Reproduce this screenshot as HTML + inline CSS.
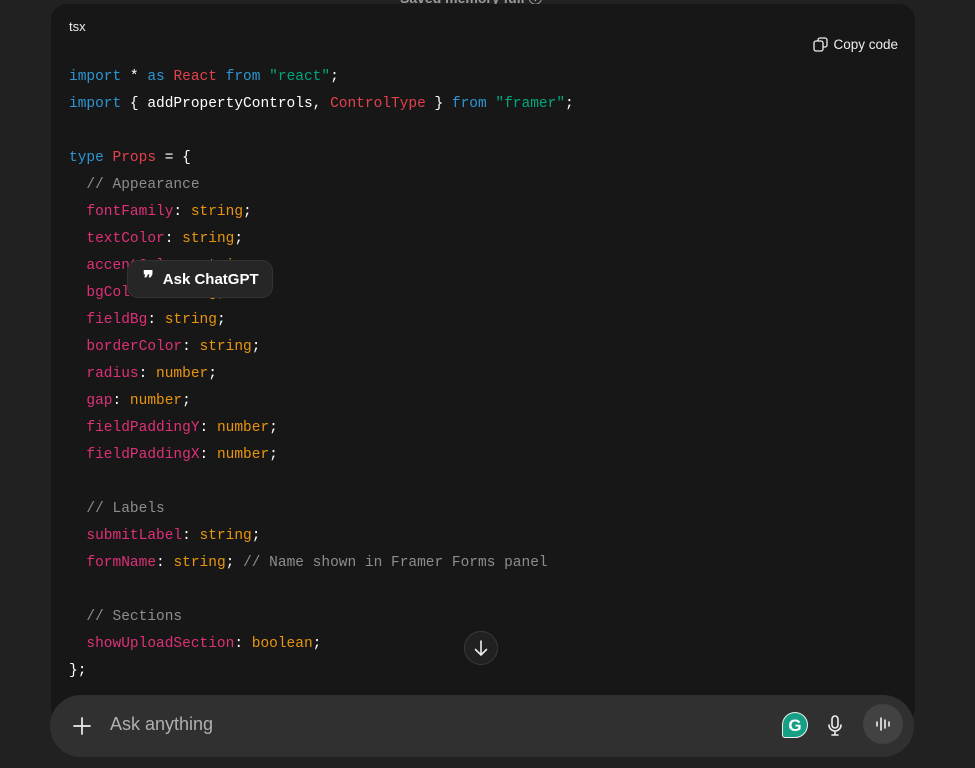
<!DOCTYPE html>
<html><head><style>
body{margin:0;width:975px;height:768px;background:#212121;overflow:hidden;position:relative;font-family:"Liberation Sans",sans-serif}
.top{position:absolute;left:400px;top:-12px;color:#9b9b9b;font-size:14px;font-weight:bold}
.code{position:absolute;left:51px;top:4px;width:864px;height:720px;background:#171717;border-radius:16px}
.lang{position:absolute;left:18px;top:15px;color:#eee;font-size:13px}
.copy{position:absolute;right:17px;top:33px;color:#eee;font-size:13.5px;display:flex;align-items:center;gap:5px}
pre{position:absolute;left:18px;top:60px;margin:0;font-family:"Liberation Mono",monospace;font-size:14.5px;line-height:27px;color:#fff}
.k{color:#2e95d3}.r{color:#e2414b}.s{color:#00a67d}.p{color:#df3079}.t{color:#e9950c}.c{color:#8d8d8d}
.ask{position:absolute;left:127px;top:260px;width:146px;height:38px;background:#262626;border:1px solid #333;border-radius:11px;box-sizing:border-box;color:#fff;font-weight:bold;font-size:15px;display:flex;align-items:center;padding-left:15px;gap:9px}
.down{position:absolute;left:464px;top:631px;width:34px;height:34px;border-radius:50%;background:#212121;border:1px solid #3a3a3a;box-sizing:border-box}
.inp{position:absolute;left:50px;top:695px;width:864px;height:62px;background:#303030;border-radius:31px}
.ph{position:absolute;left:60px;top:19px;color:#b0b0b0;font-size:18px}
.g{position:absolute;left:732px;top:17px;width:26px;height:26px;border-radius:50% 50% 50% 3px;background:#15a085;color:#fff;font-weight:bold;text-align:center;line-height:26px;font-size:17px;border:1px solid #eee;box-sizing:border-box}
.voice{position:absolute;left:813px;top:9px;width:40px;height:40px;border-radius:50%;background:#424242}
</style></head><body>
<div class="top">Saved memory full ⓘ</div>
<div class="code">
<div class="lang">tsx</div>
<div class="copy"><svg width="15" height="15" viewBox="0 0 15 15" fill="none" stroke="#eee" stroke-width="1.3"><rect x="1" y="4" width="9" height="10" rx="2"/><path d="M5 4V3a2 2 0 0 1 2-2h5a2 2 0 0 1 2 2v5a2 2 0 0 1-2 2h-2"/></svg>Copy code</div>
<pre><span class="k">import</span> * <span class="k">as</span> <span class="r">React</span> <span class="k">from</span> <span class="s">"react"</span>;
<span class="k">import</span> { addPropertyControls, <span class="r">ControlType</span> } <span class="k">from</span> <span class="s">"framer"</span>;

<span class="k">type</span> <span class="r">Props</span> = {
  <span class="c">// Appearance</span>
  <span class="p">fontFamily</span>: <span class="t">string</span>;
  <span class="p">textColor</span>: <span class="t">string</span>;
  <span class="p">accentColor</span>: <span class="t">string</span>;
  <span class="p">bgColor</span>: <span class="t">string</span>;
  <span class="p">fieldBg</span>: <span class="t">string</span>;
  <span class="p">borderColor</span>: <span class="t">string</span>;
  <span class="p">radius</span>: <span class="t">number</span>;
  <span class="p">gap</span>: <span class="t">number</span>;
  <span class="p">fieldPaddingY</span>: <span class="t">number</span>;
  <span class="p">fieldPaddingX</span>: <span class="t">number</span>;

  <span class="c">// Labels</span>
  <span class="p">submitLabel</span>: <span class="t">string</span>;
  <span class="p">formName</span>: <span class="t">string</span>; <span class="c">// Name shown in Framer Forms panel</span>

  <span class="c">// Sections</span>
  <span class="p">showUploadSection</span>: <span class="t">boolean</span>;
};</pre>
</div>
<div class="ask"><span style="font-size:20px;font-family:'Liberation Serif',serif;line-height:1">❞</span>Ask ChatGPT</div>
<div class="down"><svg width="32" height="32" viewBox="0 0 32 32" fill="none" stroke="#eee" stroke-width="1.6" stroke-linecap="round"><path d="M16 9v14M10.5 17.5L16 23l5.5-5.5"/></svg></div>
<div class="inp">
<svg style="position:absolute;left:22px;top:21px" width="20" height="20" viewBox="0 0 20 20" stroke="#eee" stroke-width="1.7" stroke-linecap="round"><path d="M10 2v16M2 10h16"/></svg>
<div class="ph">Ask anything</div>
<div class="g">G</div>
<svg style="position:absolute;left:776px;top:19px" width="18" height="24" viewBox="0 0 18 24" fill="none" stroke="#eee" stroke-width="1.6" stroke-linecap="round"><rect x="6" y="2" width="6" height="12" rx="3"/><path d="M3 11a6 6 0 0 0 12 0M9 17v4M6 21h6"/></svg>
<div class="voice"><svg width="40" height="40" viewBox="0 0 40 40" stroke="#eee" stroke-width="1.6" stroke-linecap="round"><path d="M14 18v4M18 14v12M22 16v8M26 18v4"/></svg></div>
</div>
</body></html>
